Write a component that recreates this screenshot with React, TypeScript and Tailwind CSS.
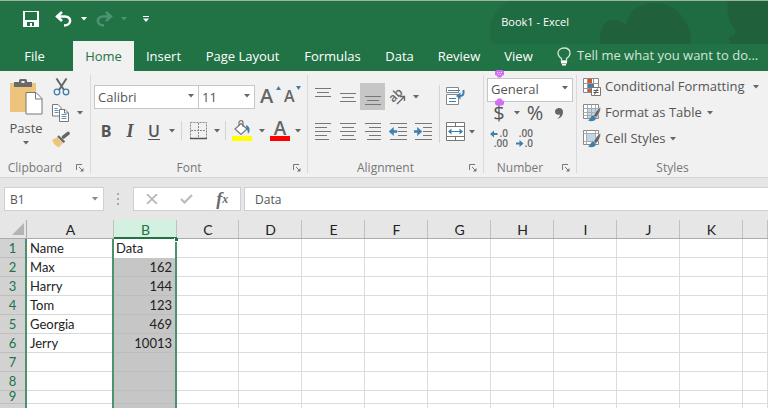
import type { ReactNode } from 'react';

const TABS = [
  { name: 'Home', width: 'w-[61px]', active: true },
  { name: 'Insert', width: 'w-[59px]' },
  { name: 'Page Layout', width: 'w-[99px]' },
  { name: 'Formulas', width: 'w-[81px]' },
  { name: 'Data', width: 'w-[53px]' },
  { name: 'Review', width: 'w-[66px]' },
  { name: 'View', width: 'w-[53px]' },
];

const COLUMNS = ['A', 'B', 'C', 'D', 'E', 'F', 'G', 'H', 'I', 'J', 'K', ''];

const ROWS: [string, string][] = [
  ['Name', 'Data'],
  ['Max', '162'],
  ['Harry', '144'],
  ['Tom', '123'],
  ['Georgia', '469'],
  ['Jerry', '10013'],
  ['', ''],
  ['', ''],
  ['', ''],
  ['', ''],
];

function Caret({ className = 'text-[#666]' }: { className?: string }) {
  return (
    <svg className={className} width="6" height="4" viewBox="0 0 6 4" fill="currentColor">
      <path d="M0 0h6L3 3.6z" />
    </svg>
  );
}

interface ToolProps {
  label: string;
  width?: string;
  className?: string;
  children: ReactNode;
}

function Tool({ label, width = 'w-6', className = '', children }: ToolProps) {
  return (
    <button aria-label={label} className={`flex h-full shrink-0 items-center justify-center ${width} ${className}`}>
      {children}
    </button>
  );
}

function Drop({ label }: { label: string }) {
  return (
    <Tool label={`${label} options`} width="w-3">
      <Caret />
    </Tool>
  );
}

function Separator() {
  return <div className="my-1 w-px shrink-0 bg-[#dadada]" />;
}

function Group({ title, width, launcher = true, children }: { title: string; width: string; launcher?: boolean; children: ReactNode }) {
  return (
    <section className={`flex flex-col ${width}`}>
      <div className="h-[88px]">{children}</div>
      <div className="flex h-[18px] items-center text-xs text-[#777]">
        <span className="flex-1 text-center">{title}</span>
        {launcher && (
          <button aria-label={`${title} settings`} className="flex w-5 justify-center">
            <svg width="8" height="8" viewBox="0 0 8 8" fill="none" stroke="#777">
              <path d="M.5 6V.5H6M3 3l3.5 3.5" />
              <path d="M7.5 4v3.5H4z" fill="#777" stroke="none" />
            </svg>
          </button>
        )}
      </div>
    </section>
  );
}

function Picker({ label, value, width }: { label: string; value: string; width: string }) {
  return (
    <div className={`relative h-6 shrink-0 ${width}`}>
      <select aria-label={label} className="h-full w-full appearance-none border border-[#c6c6c6] bg-white pl-[3px] text-[13px] text-[#555]">
        <option>{value}</option>
      </select>
      <span className="pointer-events-none absolute top-2.5 right-[5px]">
        <Caret />
      </span>
    </div>
  );
}

/* Horizontal rules, each given as [x, y, length] */
function Lines({ rules, children }: { rules: number[][]; children?: ReactNode }) {
  return (
    <svg width="18" height="18" viewBox="0 0 18 18">
      {rules.map(([x, y, length]) => (
        <rect key={y} x={x} y={y} width={length} height="1" fill="#777" />
      ))}
      {children}
    </svg>
  );
}

function PasteIcon() {
  return (
    <svg width="34" height="36" viewBox="0 0 34 36">
      <rect x="1" y="4" width="26" height="29" fill="#edc47c" />
      <path d="M5 3h5V1.500C10 .5 11 0 12 0h4c1 0 2 .5 2 1.500V3h5v5H5z" fill="#6a6a6a" />
      <rect x="12.500" y="2" width="3" height="2" fill="#f1f1f1" />
      <path d="M17 13.500h10l6 6v15.500H17z" fill="#fff" stroke="#777" />
      <path d="M26.500 13.500V20H33" fill="none" stroke="#777" />
    </svg>
  );
}

function CutIcon() {
  return (
    <svg width="17" height="18" viewBox="0 0 17 18" fill="none">
      <path d="M3.500.5 11 12M13.500.5 6 12" stroke="#666" strokeWidth="2" />
      <circle cx="4" cy="14" r="2.800" stroke="#3f7fae" strokeWidth="1.300" />
      <circle cx="13" cy="14" r="2.800" stroke="#3f7fae" strokeWidth="1.300" />
    </svg>
  );
}

function CopyIcon() {
  return (
    <svg width="18" height="18" viewBox="0 0 18 18" fill="#fff" stroke="#777">
      <path d="M.5.5h5.500l3 3v8.500H.5z" />
      <path d="M2.500 4.500h3M2.500 6.500h4M2.500 8.500h4" stroke="#5b93bd" />
      <path d="M7.500 5.500H13l3.500 3.500v8.500h-9z" />
      <path d="M12.500 5.500V9h4" fill="none" />
      <path d="M9.500 10.500h5M9.500 12.500h5M9.500 14.500h5" stroke="#5b93bd" />
    </svg>
  );
}

function PainterIcon() {
  return (
    <svg width="19" height="17" viewBox="0 0 19 17">
      <path d="M17 2l-5 4" stroke="#666" strokeWidth="3.500" strokeLinecap="round" />
      <path d="M7 4l7 6.500-2 1.800L5.500 5.500z" fill="#666" />
      <path d="M5.500 6l6 6.500-4.500 4.500C4 15.500 1.500 12.500 0 9z" fill="#edc47c" />
    </svg>
  );
}

function FontStep({ grow = false }: { grow?: boolean }) {
  return (
    <span className="relative flex h-full w-full items-center pl-px leading-none font-semibold text-[#666]">
      <span className={grow ? 'text-xl leading-none' : 'text-base leading-none'}>A</span>
      <svg className="absolute top-1 right-0.5" width="5" height="4" viewBox="0 0 5 4" fill="#3f7fae">
        <path d={grow ? 'M0 4h5L2.500 0z' : 'M0 0h5L2.500 4z'} />
      </svg>
    </span>
  );
}

function BordersIcon() {
  return (
    <svg width="17" height="18" viewBox="0 0 17 18" fill="none" stroke="#888">
      <path d="M.5.5h16v16H.5zM8.500 1v15M1 8.500h15" strokeDasharray="2 1" />
      <path d="M0 16.500h17" stroke="#555" strokeWidth="1.500" />
    </svg>
  );
}

function FillIcon() {
  return (
    <svg width="20" height="21" viewBox="0 0 20 21">
      <rect y="16" width="20" height="5" fill="#ff0" />
      <path d="M9 3.500l6 5.500-6 5.500L3 9z" fill="#fff" stroke="#777" strokeWidth="1.200" />
      <path d="M7 6V2.500C7 0 11 0 11 2.500V7" fill="none" stroke="#777" strokeWidth="1.200" />
      <path d="M14 5c3 1 4 3.500 3.500 6.500L16 14c-.5-2 0-4-1.500-5z" fill="#3f7fae" />
    </svg>
  );
}

function FontColorIcon() {
  return (
    <svg className="overflow-visible" width="20" height="21" viewBox="0 0 20 21">
      <text x="10" y="15" textAnchor="middle" fontSize="19" fontWeight="600" fill="#666">A</text>
      <rect y="16" width="20" height="5" fill="#f00" />
    </svg>
  );
}

function OrientationIcon() {
  return (
    <svg className="overflow-visible" width="18" height="18" viewBox="0 0 18 18">
      <text x="3" y="14" fontSize="12" fontWeight="600" fill="#666" transform="rotate(-45 5 13)">ab</text>
      <path d="M8 16l7-7M11 8.500h4.500V13" fill="none" stroke="#666" strokeWidth="1.300" />
    </svg>
  );
}

function WrapIcon() {
  return (
    <svg width="20" height="19" viewBox="0 0 20 19" fill="#fff">
      <path d="M1.500.5h12v5h-12zM1.500 7.500h12v10h-12z" stroke="#888" />
      <path d="M3 3.500h12M4 11.500h7M4 14.500h7" stroke="#3f7fae" />
      <path d="M18.500 3v3c0 2-1.500 3-4 3" fill="none" stroke="#3f7fae" strokeWidth="2" />
      <path d="M11 9l4.500-3.500v7z" fill="#3f7fae" />
    </svg>
  );
}

function MergeIcon() {
  return (
    <svg width="19" height="19" viewBox="0 0 19 19" fill="none">
      <path d="M.5.5h18v18H.5z" fill="#fff" stroke="#777" />
      <path d="M.5 4.500h18M.5 14.500h18M9.500 0v4M9.500 15v4" stroke="#777" />
      <path d="M3 9.500h13" stroke="#3f7fae" />
      <path d="M2 9.500 5.500 6.500v6zM17 9.500l-3.500-3v6z" fill="#3f7fae" />
    </svg>
  );
}

function DecimalIcon({ increase = false }: { increase?: boolean }) {
  return (
    <svg className="overflow-visible" width="20" height="20" viewBox="0 0 20 20" fontSize="10" fontWeight="600" fill="#666">
      <text x="18" y="8" textAnchor="end">{increase ? '.0' : '.00'}</text>
      <text x="18" y="18" textAnchor="end">{increase ? '.00' : '.0'}</text>
      {increase ? (
        <path d="M0 5 4 1.500V4h3.500v2H4v2.500z" fill="#3f7fae" />
      ) : (
        <path d="M8.500 14.500l-4-3.500v2.500H1v2h3.500V18z" fill="#3f7fae" />
      )}
    </svg>
  );
}

function StyleIcon({ kind }: { kind: 'conditional' | 'table' | 'cell' }) {
  return (
    <svg width="18" height="18" viewBox="0 0 18 18" fill="none">
      <path d="M.5.5h15v14H.5z" fill="#fff" stroke="#888" />
      {kind === 'conditional' && (
        <>
          <path d="M.5 5.500h15M.5 10.500h15M4.500.5v14M10.500.5v14" stroke="#999" />
          <path d="M5 1h4v4H5zM5 11h3v3H5z" fill="#d9532c" />
          <path d="M5 6h6v4H5z" fill="#3f7fae" />
          <path d="M8.500 9.500h9v8h-9z" fill="#fff" stroke="#777" />
          <path d="M10.500 12.500h5M10.500 14.500h5M14.500 10.500l-3 6" stroke="#555" />
        </>
      )}
      {kind === 'table' && (
        <>
          <path d="M5 5h10v9H5z" fill="#bcd6ea" />
          <path d="M.5 4.500h15M.5 8.500h15M.5 11.500h15M4.500.5v14M8.500.5v14M12.500.5v14" stroke="#aaa" />
        </>
      )}
      {kind === 'cell' && (
        <>
          <path d="M4 4h9v7H4z" fill="#bcd6ea" />
          <path d="M.5 3.500h15M.5 11.500h15M3.500.5v14M12.500.5v14" stroke="#aaa" />
        </>
      )}
      {kind !== 'conditional' && (
        <>
          <path d="M17.500 3c-3 2-5.500 5.500-7 8.500l2.500 2C15.500 11 18 7 17.500 3z" fill="#666" stroke="#f1f1f1" strokeWidth=".6" />
          <path d="M10.500 11.500c-3 0-2.500 3.500-5.500 5 3 1.500 7.500 1 8-2.500z" fill="#3f7fae" />
        </>
      )}
    </svg>
  );
}

function TitleBar() {
  return (
    <header className="relative flex h-[41px] items-center border-t border-[#9db3a6] text-white">
      <svg className="absolute top-0 right-0" width="290" height="43" viewBox="0 0 290 43">
        <path d="M30 0h260v43H14C8 24 16 8 30 0z" fill="#1f6c42" />
        <path d="M122 43c-2-14 4-24 14-24 5 0 9 2 12 5 2-14 14-22 30-22 17 0 28 12 34 28 1 5 1 9 0 13zM250 0h40v43h-38l-1-7c6-2 8-5 5-9-5-6-8-15-6-27z" fill="#20613c" />
      </svg>
      <div className="relative flex w-full items-center pb-1 pl-[23px]">
        <button aria-label="Save">
          <svg width="16" height="16" viewBox="0 0 16 16">
            <path d="M0 0h16v16H0z" fill="#fff" />
            <path d="M2 1h12v8H2zM4 11h7v4H9v-3H7v3H4z" fill="#217346" />
          </svg>
        </button>
        <button aria-label="Undo" className="ml-4">
          <svg width="18" height="16" viewBox="0 0 18 16" fill="none" stroke="#fff" strokeWidth="2.500">
            <path d="M2 5.500h8c7 0 7 9-1 9M7 1 2 5.500 7 10" />
          </svg>
        </button>
        <button aria-label="Undo history" className="ml-2"><Caret className="text-white" /></button>
        <button aria-label="Redo" className="ml-2">
          <svg width="18" height="16" viewBox="0 0 18 16" fill="none" stroke="#4f9270" strokeWidth="2.500">
            <path d="M16 5.500H8c-7 0-7 9 1 9M11 1l5 4.500L11 10" />
          </svg>
        </button>
        <button aria-label="Redo history" className="ml-2"><Caret className="text-[#4f9270]" /></button>
        <button aria-label="Customize toolbar" className="ml-4">
          <svg width="6" height="7" viewBox="0 0 6 7" fill="#fff"><path d="M0 0h6v1H0zM0 2.500h6L3 6z" /></svg>
        </button>
        <h1 className="mt-1.5 ml-auto pr-[199px] text-[11px]">Book1 - Excel</h1>
      </div>
    </header>
  );
}

function TabBar() {
  return (
    <nav className="relative flex h-[30px] text-[13px] text-white">
      <button className="w-[73px] pt-0.5 pr-1">File</button>
      {TABS.map((tab) => (
        <button key={tab.name} className={`shrink-0 pt-px ${tab.width} ${tab.active ? 'bg-[#f1f1f1] text-[#217346]' : ''}`}>
          {tab.name}
        </button>
      ))}
      <button className="ml-3 flex items-center gap-1.5 whitespace-nowrap text-[#d3e5da]">
        <svg width="14" height="19" viewBox="0 0 14 19" fill="none" stroke="#d3e5da" strokeWidth="1.300">
          <path d="M4.500 14v-2.500C2.500 10 1 8.500 1 6.200 1 3 3.500 1 7 1s6 2 6 5.200c0 2.300-1.500 3.800-3.500 5.300V14z" />
          <path d="M4 14h6v2.500H4zM5 17h4v1.500H5z" fill="#fff" stroke="none" />
        </svg>
        Tell me what you want to do...
      </button>
    </nav>
  );
}

function Ribbon() {
  return (
    <div className="flex h-[107px] shrink-0 border-b border-[#d2d2d2] bg-[#f1f1f1] text-[#555]">
      <Group title="Clipboard" width="w-[90px] shrink-0">
        <div className="flex pt-[3px]">
          <button className="flex w-[52px] flex-col items-center pt-[5px] text-[13px] leading-[26px]">
            <PasteIcon />
            Paste
            <Caret />
          </button>
          <div>
            <div className="flex h-[26px]"><Tool label="Cut" width="w-[18px]"><CutIcon /></Tool></div>
            <div className="flex h-[26px] gap-1">
              <Tool label="Copy" width="w-[18px]"><CopyIcon /></Tool>
              <Drop label="Copy" />
            </div>
            <div className="flex h-[26px]"><Tool label="Format Painter" width="w-[18px]"><PainterIcon /></Tool></div>
          </div>
        </div>
      </Group>
      <Separator />

      <Group title="Font" width="w-[216px] shrink-0">
        <div className="flex flex-col gap-2 pt-[11px] pl-[3px]">
          <div className="flex h-[27px] items-center">
            <Picker label="Font" value="Calibri" width="w-[105px]" />
            <Picker label="Font size" value="11" width="-ml-px w-[57px]" />
            <Tool label="Increase font size" className="ml-1"><FontStep grow /></Tool>
            <Tool label="Decrease font size" width="w-5"><FontStep /></Tool>
          </div>
          <div className="flex h-[27px]">
            <Tool label="Bold" className="text-base font-bold">B</Tool>
            <Tool label="Italic" className="font-['Liberation_Serif'] text-lg font-bold italic">I</Tool>
            <Tool label="Underline" className="text-base font-semibold underline underline-offset-2">U</Tool>
            <Drop label="Underline" />
            <div className="mx-[3px] my-1 w-px bg-[#d4d4d4]" />
            <Tool label="Borders" width="w-[26px]"><BordersIcon /></Tool>
            <Drop label="Borders" />
            <div className="mx-[2px] my-1 w-px bg-[#d4d4d4]" />
            <Tool label="Fill color" width="w-7"><FillIcon /></Tool>
            <Drop label="Fill color" />
            <Tool label="Font color"><FontColorIcon /></Tool>
            <Drop label="Font color" />
          </div>
        </div>
      </Group>
      <Separator />

      <Group title="Alignment" width="w-[175px] shrink-0">
        <div className="flex pt-3 pl-[2px]">
          <div className="flex w-[125px] flex-col gap-2">
            <div className="flex h-[27px]">
              <Tool label="Top align" width="w-[25px]"><Lines rules={[[1, 0, 16], [3, 4, 12], [1, 8, 16]]} /></Tool>
              <Tool label="Middle align" width="w-[25px]"><Lines rules={[[1, 5, 16], [3, 9, 12], [1, 13, 16]]} /></Tool>
              <Tool label="Bottom align" width="w-[25px]" className="bg-[#c6c6c6]"><Lines rules={[[1, 8, 16], [3, 12, 12], [1, 16, 16]]} /></Tool>
              <Tool label="Orientation" width="w-[25px]"><OrientationIcon /></Tool>
              <Drop label="Orientation" />
            </div>
            <div className="flex h-[27px]">
              <Tool label="Align left" width="w-[25px]"><Lines rules={[[1, 0, 16], [1, 4, 12], [1, 8, 16], [1, 12, 12], [1, 16, 14]]} /></Tool>
              <Tool label="Center" width="w-[25px]"><Lines rules={[[1, 0, 16], [3, 4, 12], [1, 8, 16], [3, 12, 12], [1, 16, 16]]} /></Tool>
              <Tool label="Align right" width="w-[25px]"><Lines rules={[[1, 0, 16], [5, 4, 12], [1, 8, 16], [5, 12, 12], [3, 16, 14]]} /></Tool>
              <Tool label="Decrease indent" width="w-[25px]">
                <Lines rules={[[1, 0, 17], [9, 4, 9], [9, 8, 9], [9, 12, 9], [1, 16, 17]]}>
                  <path d="M0 8.500 4.500 4.500v3H8v2H4.500v3z" fill="#3f7fae" stroke="#3f7fae" strokeWidth=".5" />
                </Lines>
              </Tool>
              <Tool label="Increase indent" width="w-[25px]">
                <Lines rules={[[1, 0, 17], [9, 4, 9], [9, 8, 9], [9, 12, 9], [1, 16, 17]]}>
                  <path d="M8 8.500 3.500 4.500v3H0v2h3.500v3z" fill="#3f7fae" stroke="#3f7fae" strokeWidth=".5" />
                </Lines>
              </Tool>
            </div>
          </div>
          <div className="mx-1 my-[2px] w-px bg-[#d4d4d4]" />
          <div className="flex flex-col gap-2">
            <div className="flex h-[27px]"><Tool label="Wrap text" width="w-[22px]"><WrapIcon /></Tool></div>
            <div className="flex h-[27px]">
              <Tool label="Merge and center" width="w-[22px]"><MergeIcon /></Tool>
              <Drop label="Merge" />
            </div>
          </div>
        </div>
      </Group>
      <Separator />

      <Group title="Number" width="w-[92px] shrink-0">
        <div className="relative pt-[5px] pl-[3px]">
          <Picker label="Number format" value="General" width="w-[86px]" />
          <div className="flex h-[26px] text-xl">
            <Tool label="Accounting format">$</Tool>
            <Drop label="Accounting format" />
            <Tool label="Percent style">%</Tool>
            <Tool label="Comma style">
              <svg width="8" height="11" viewBox="0 0 8 11" fill="#666">
                <path d="M4 0c2.500 0 4 1.500 4 4 0 3.500-2 6-6 7 2-1.500 3-3 3-4.500C2 7.500 0 6 0 3.500 0 1.500 2 0 4 0z" />
              </svg>
            </Tool>
          </div>
          <div className="flex h-[26px]">
            <Tool label="Increase decimal" width="w-[25px]"><DecimalIcon increase /></Tool>
            <Tool label="Decrease decimal" width="w-[25px]"><DecimalIcon /></Tool>
          </div>
          <svg className="pointer-events-none absolute -top-px left-[11px]" width="9" height="36" viewBox="0 0 9 36" fill="#d36df2">
            <path d="M1.500 0h6L9 1.500V5L7.500 5.500 6 7.500H3L1.500 5.500 0 5V1.500zM3 28.500h3l1.500 2L9 31v3l-1.500 1.500h-6L0 34v-3l1.500-.5z" />
            <path d="M2 2.500h1M4 2.500h1M6 2.500h1M3 4.500h1M5 4.500h1" stroke="#f4d4fd" />
          </svg>
        </div>
      </Group>
      <Separator />

      <Group title="Styles" width="min-w-0 flex-1" launcher={false}>
        <div className="flex flex-col pt-[3px] pl-1.5 text-[13px]">
          <button className="flex h-[26px] items-center gap-1 whitespace-nowrap">
            <StyleIcon kind="conditional" />Conditional Formatting<Caret className="ml-1 text-[#666]" />
          </button>
          <button className="flex h-[26px] items-center gap-1 whitespace-nowrap">
            <StyleIcon kind="table" />Format as Table<Caret className="ml-px text-[#666]" />
          </button>
          <button className="flex h-[26px] items-center gap-1 whitespace-nowrap">
            <StyleIcon kind="cell" />Cell Styles<Caret className="ml-px text-[#666]" />
          </button>
        </div>
      </Group>
    </div>
  );
}

function FormulaBar() {
  return (
    <div className="flex h-[42px] shrink-0 items-start pt-[9px] pl-1 text-xs text-[#555]">
      <div className="relative h-6 w-[100px]">
        <input aria-label="Name box" defaultValue="B1" className="h-full w-full border border-[#d0d0d0] bg-white pl-[5px]" />
        <span className="absolute top-2.5 right-1.5"><Caret className="text-[#888]" /></span>
      </div>
      <svg className="mt-1.5 ml-[13px]" width="3" height="12" viewBox="0 0 3 12" fill="#aaa">
        <path d="M0 0h2v2H0zM0 5h2v2H0zM0 10h2v2H0z" />
      </svg>
      <div className="ml-[13px] flex h-6 w-[108px] border border-[#d0d0d0] bg-white">
        <Tool label="Cancel" width="flex-1">
          <svg width="12" height="10" viewBox="0 0 12 10" stroke="#bbb" strokeWidth="1.800"><path d="M1 0l10 10M11 0 1 10" /></svg>
        </Tool>
        <Tool label="Enter" width="flex-1">
          <svg width="13" height="10" viewBox="0 0 13 10" fill="none" stroke="#bbb" strokeWidth="2.200"><path d="M1 5l3.500 3.500L12 1" /></svg>
        </Tool>
        <Tool label="Insert function" width="flex-1" className="font-['Liberation_Serif'] font-bold text-[#6a6a6a] italic">
          <span className="text-lg leading-none">f</span>x
        </Tool>
      </div>
      <input aria-label="Formula" defaultValue="Data" className="ml-[3px] h-6 min-w-0 flex-1 border-y border-l border-[#d0d0d0] bg-white pl-2.5" />
    </div>
  );
}

function Sheet() {
  return (
    <table className="w-full table-fixed border-separate border-spacing-0 bg-white font-[Lato,sans-serif] text-[13px] leading-[19px] text-[#222]">
      <colgroup>
        <col className="w-[27px]" />
        <col className="w-[87px]" />
        {COLUMNS.slice(1, 11).map((name) => (
          <col key={name} className={name === 'C' ? 'w-[62px]' : 'w-[63px]'} />
        ))}
        <col />
      </colgroup>
      <thead>
        <tr className="text-sm leading-[18px]">
          <th aria-label="Select all" className="h-[19px] border-r border-b border-[#ababab] bg-[#e6e6e6] p-0">
            <svg className="ml-auto" width="15" height="14" viewBox="0 0 15 14" fill="#b4b4b4"><path d="M13 1v12H1z" /></svg>
          </th>
          {COLUMNS.map((name) => (
            <th
              key={name}
              className={`h-[19px] p-0 font-normal ${
                name === 'B'
                  ? 'bg-[#d3f0e0] text-[#217346] shadow-[inset_0_-2px_#217346,inset_-1px_0_#c0c0c0]'
                  : 'bg-[#e6e6e6] shadow-[inset_0_-1px_#ababab,inset_-1px_0_#c0c0c0]'
              }`}
            >
              {name}
            </th>
          ))}
        </tr>
      </thead>
      <tbody>
        {ROWS.map(([name, value], index) => {
          const height = index === 8 ? 'h-[13px] leading-[10px]' : 'h-[19px]';
          return (
            <tr key={index}>
              <th
                className={`bg-[#d2d2d2] p-0 pr-[2px] align-top font-normal text-[#217346] shadow-[inset_-2px_0_#4c936b,inset_0_-1px_#bebebe] ${height}`}
              >
                {index + 1}
              </th>
              <td className={`p-0 pl-[3px] align-top shadow-[inset_-2px_0_#4c936b,inset_0_-1px_#d9d9d9] ${height}`}>{name}</td>
              <td
                className={`relative p-0 align-top ${height} ${
                  index === 0
                    ? 'pl-[2px] text-left shadow-[inset_-2px_0_#4c936b]'
                    : 'bg-[#c6c6c6] pr-[5px] text-right shadow-[inset_-2px_0_#4c936b,inset_0_-1px_#bdbdbd]'
                }`}
              >
                {value}
                {index === 0 && <span className="absolute -top-px -right-px size-1 border-b border-l border-white bg-[#217346]" />}
              </td>
              {COLUMNS.slice(2).map((column) => (
                <td key={column} className={`border-r border-b border-[#dcdcdc] p-0 ${height}`} />
              ))}
            </tr>
          );
        })}
      </tbody>
    </table>
  );
}

export default function App() {
  return (
    <div className="flex h-screen flex-col overflow-hidden bg-[#e6e6e6] font-['Open_Sans','Noto_Sans',sans-serif]">
      <div className="shrink-0 bg-[#217346]">
        <TitleBar />
        <TabBar />
      </div>
      <Ribbon />
      <FormulaBar />
      <Sheet />
    </div>
  );
}
